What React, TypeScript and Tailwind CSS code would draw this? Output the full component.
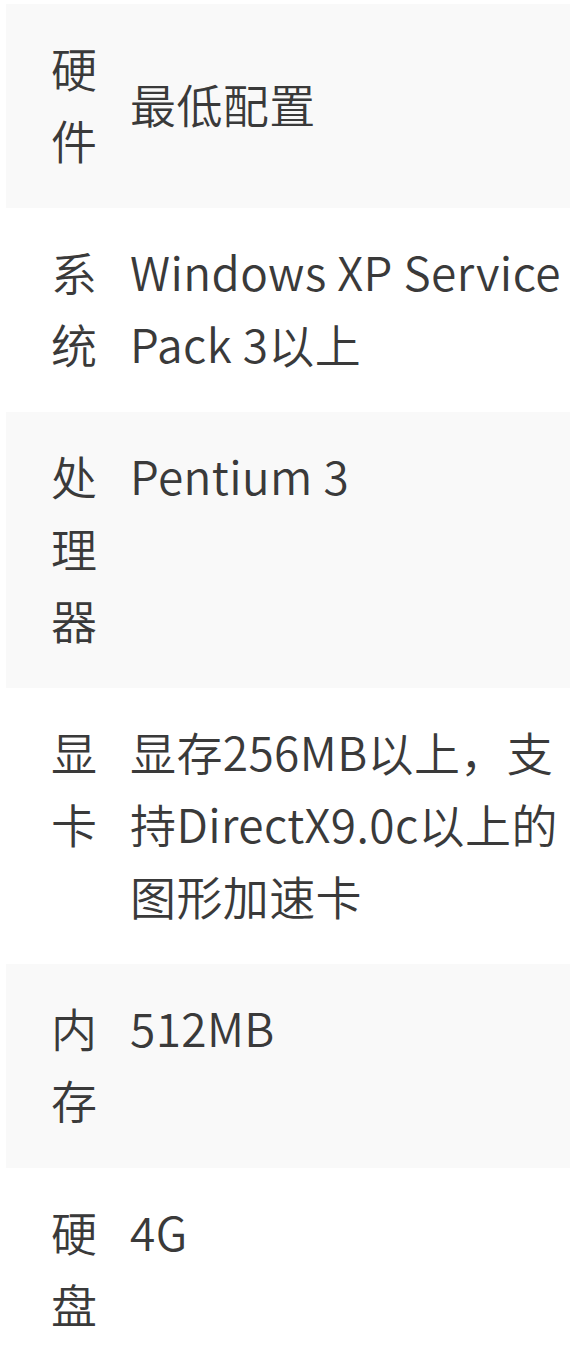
import React from "react";

const rows: { k: string; v: string; head?: boolean }[] = [
  { k: "硬件", v: "最低配置", head: true },
  { k: "系统", v: "Windows XP Service Pack 3以上" },
  { k: "处理器", v: "Pentium 3" },
  { k: "显卡", v: "显存256MB以上，支持DirectX9.0c以上的图形加速卡" },
  { k: "内存", v: "512MB" },
  { k: "硬盘", v: "4G" },
];

export default function App() {
  return (
    <div
      className="min-h-[1355px] w-[571px] bg-white pt-[4px] pl-[6px] pr-[1px] text-[#3a3a3a]"
      style={{ fontFamily: '"Noto Sans CJK SC", "Noto Sans", sans-serif' }}
    >
      {rows.map((r, i) => (
        <div
          key={i}
          className={`flex pt-[27px] pb-[33px] text-[46px] font-[350] leading-[72px] tracking-[0.4px] ${
            i % 2 === 0 ? "bg-[#f9f9f9]" : "bg-white"
          } ${r.head ? "items-center" : "items-start"}`}
        >
          <div className="ml-[45px] w-[46px] shrink-0 break-all tracking-normal">{r.k}</div>
          <div className="ml-[33px] w-[438px] break-all">{r.v}</div>
        </div>
      ))}
    </div>
  );
}
